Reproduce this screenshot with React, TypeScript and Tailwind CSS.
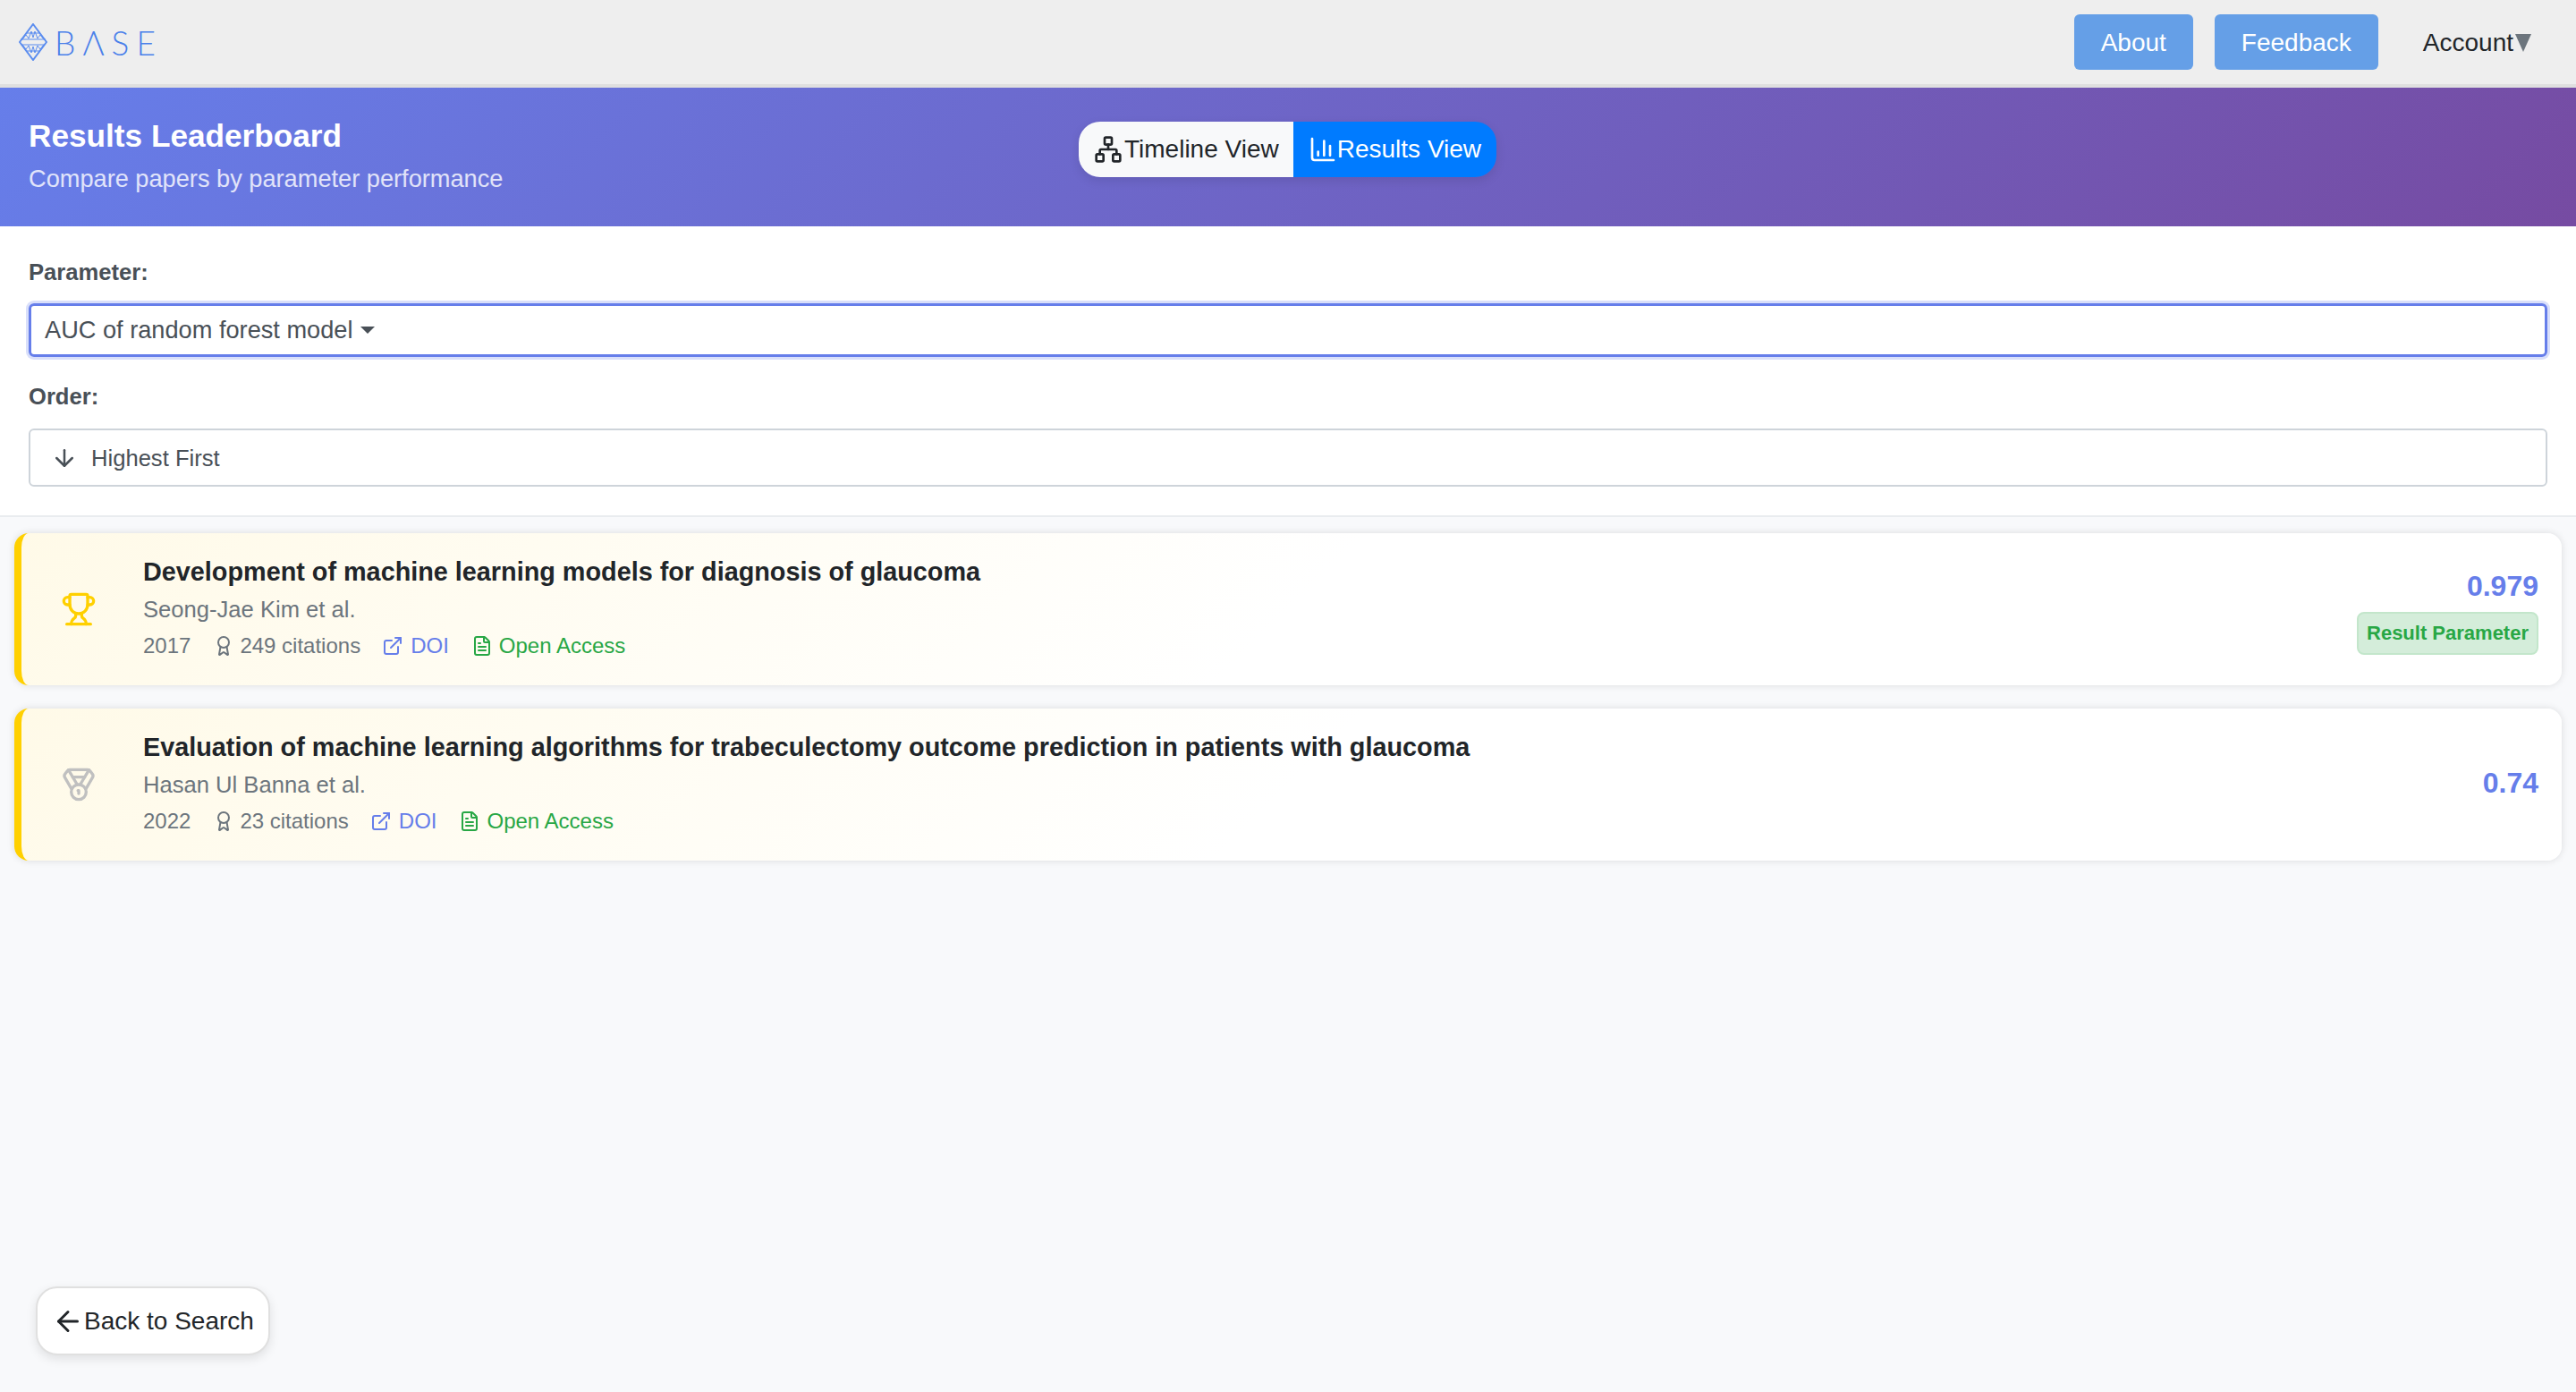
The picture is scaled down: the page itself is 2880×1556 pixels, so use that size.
import React from 'react';
import { ArrowDown, ArrowLeft, Award, ChartColumn, ExternalLink, FileText, Medal, Network, Trophy } from 'lucide-react';

interface Paper {
  title: string;
  authors: string;
  year: number;
  citations: number;
  value: string;
  first: boolean;
}

const papers: Paper[] = [
  {
    title: 'Development of machine learning models for diagnosis of glaucoma',
    authors: 'Seong-Jae Kim et al.',
    year: 2017,
    citations: 249,
    value: '0.979',
    first: true,
  },
  {
    title: 'Evaluation of machine learning algorithms for trabeculectomy outcome prediction in patients with glaucoma',
    authors: 'Hasan Ul Banna et al.',
    year: 2022,
    citations: 23,
    value: '0.74',
    first: false,
  },
];

// Diamond mark of the logo
const LogoMark = () => (
  <svg width="32" height="42" viewBox="0 0 32 42" fill="none" stroke="#5b8def" strokeWidth="1.5">
    <path d="M16 1 L31 21 L16 41 L1 21 Z" strokeWidth="2" />
    <path d="M9 11 H23 M2 18 H30 M3 24 H29 M9 31 H23" strokeWidth="1" />
    <path d="M4 18 L8 13 L11 17 L14 9 L16 16 L18 9 L21 17 L24 13 L28 18" strokeWidth="1" />
    <path d="M4 24 L8 29 L11 25 L14 33 L16 26 L18 33 L21 25 L24 29 L28 24" strokeWidth="1" />
  </svg>
);

const PaperCard = ({ paper }: { paper: Paper }) => (
  <div className="flex h-[170px] items-center rounded-[16px] border-l-[8px] border-l-[#ffd000] bg-[linear-gradient(135deg,#fffae8_0%,#ffffff_50%)] pl-[44px] pr-[26px] shadow-[0_0_8px_rgba(0,0,0,0.12)]">
    <div className="flex w-[92px] shrink-0">
      {paper.first ? (
        <Trophy size={40} strokeWidth={2} className="text-[#ffd000]" />
      ) : (
        <Medal size={40} strokeWidth={2} className="text-[#c0c0c0]" />
      )}
    </div>
    <div className="min-w-0 flex-1 pb-[2px]">
      <div className="text-[28.8px] font-bold leading-[36px] text-[#212529]">{paper.title}</div>
      <div className="mt-[7px] text-[25.6px] leading-[34px] text-[#6c757d]">{paper.authors}</div>
      <div className="mt-[7px] flex items-center text-[24px] leading-[34px] text-[#6c757d]">
        <span>{paper.year}</span>
        <span className="ml-[25px] flex items-center gap-[6px]">
          <Award size={24} />
          {paper.citations} citations
        </span>
        <span className="ml-[24px] flex items-center gap-[8px] text-[#667eea]">
          <ExternalLink size={24} />
          DOI
        </span>
        <span className="ml-[25px] flex items-center gap-[7px] text-[#28a745]">
          <FileText size={24} />
          Open Access
        </span>
      </div>
    </div>
    <div className={paper.first ? 'flex flex-col items-end pt-[6px]' : 'flex flex-col items-end pb-[4px]'}>
      <div className="text-[32px] font-bold leading-[38px] text-[#667eea]">{paper.value}</div>
      {paper.first && (
        <div className="mt-[10px] rounded-[8px] border-2 border-[#c3e6cb] bg-[#d4edda] px-[9px] py-[7px] text-[22px] font-bold leading-[30px] text-[#28a745]">
          Result Parameter
        </div>
      )}
    </div>
  </div>
);

export default function App() {
  return (
    <div className="relative h-screen overflow-hidden bg-[#f8f9fb] font-['Liberation_Sans',sans-serif] text-[#212529]">
      {/* top nav */}
      <nav className="flex h-[98px] items-center justify-between border-b-[4px] border-b-[#dfdfdf] bg-[#eeeeee] pl-[21px] pr-[50px]">
        <div className="flex items-center gap-[8px]">
          <LogoMark />
          <span className="font-['Lato',sans-serif] text-[37px] font-light leading-none tracking-[8px] text-[#4a80ea]">BΛSE</span>
        </div>
        <div className="flex items-center">
          <button className="h-[62px] rounded-[6px] bg-[#659fe7] px-[30px] pt-[2px] text-[28px] text-white">About</button>
          <button className="ml-[24px] h-[62px] rounded-[6px] bg-[#659fe7] px-[30px] pt-[2px] text-[28px] text-white">Feedback</button>
          <div className="ml-[50px] flex items-center pt-[2px] text-[28px] text-[#212529]">
            Account
            <span className="ml-[2px] h-0 w-0 border-x-[9px] border-t-[20px] border-x-transparent border-t-[#6c757d]" />
          </div>
        </div>
      </nav>

      {/* leaderboard header */}
      <header className="relative flex h-[155px] items-center bg-[linear-gradient(135deg,#667eea_0%,#764ba2_100%)] px-[32px] text-white">
        <div className="pb-[4px]">
          <h1 className="text-[35.2px] font-bold leading-[44px]">Results Leaderboard</h1>
          <p className="mt-[8px] text-[27.2px] leading-[36px] text-white/80">Compare papers by parameter performance</p>
        </div>
        <div className="absolute left-[1206px] top-[38px] flex h-[62px] overflow-hidden rounded-[24px] text-[28px] shadow-[0_4px_12px_rgba(0,0,0,0.1)]">
          <div className="flex items-center gap-[2px] bg-[#f8f9fa] pl-[17px] pr-[16px] text-[#212529]">
            <Network size={32} />
            Timeline View
          </div>
          <div className="flex items-center gap-0 bg-[#007bff] pl-[17px] pr-[17px] text-white">
            <ChartColumn size={32} />
            Results View
          </div>
        </div>
      </header>

      {/* filters */}
      <section className="border-b-2 border-b-[#e9ecef] bg-white px-[32px] pb-[32px] pt-[37px]">
        <div className="text-[25.6px] font-bold leading-[28px] text-[#495057]">Parameter:</div>
        <div className="mt-[21px] flex h-[60px] items-center rounded-[6px] border-[3px] border-[#667eea] px-[15px] text-[27.2px] text-[#495057] shadow-[0_0_0_3px_rgba(102,126,234,0.25)]">
          AUC of random forest model
          <span className="ml-[8px] h-0 w-0 border-x-[8px] border-t-[8px] border-x-transparent border-t-[#495057]" />
        </div>
        <div className="mt-[30px] text-[25.6px] font-bold leading-[28px] text-[#495057]">Order:</div>
        <div className="mt-[22px] flex h-[65px] items-center rounded-[6px] border-2 border-[#ced4da] pl-[23px] pt-[1px] text-[25.6px] text-[#495057]">
          <ArrowDown size={30} />
          <span className="ml-[15px]">Highest First</span>
        </div>
      </section>

      {/* results */}
      <main className="flex flex-col gap-[26px] px-[16px] pt-[18px]">
        {papers.map((paper) => (
          <PaperCard key={paper.title} paper={paper} />
        ))}
      </main>

      <button className="absolute bottom-[41px] left-[40px] flex h-[77px] items-center gap-0 rounded-[24px] border-2 border-[#e0e0e0] bg-white pl-[16px] pr-[16px] text-[28px] text-[#212529] shadow-[0_4px_12px_rgba(0,0,0,0.1)]">
        <ArrowLeft size={36} strokeWidth={2} />
        Back to Search
      </button>
    </div>
  );
}
